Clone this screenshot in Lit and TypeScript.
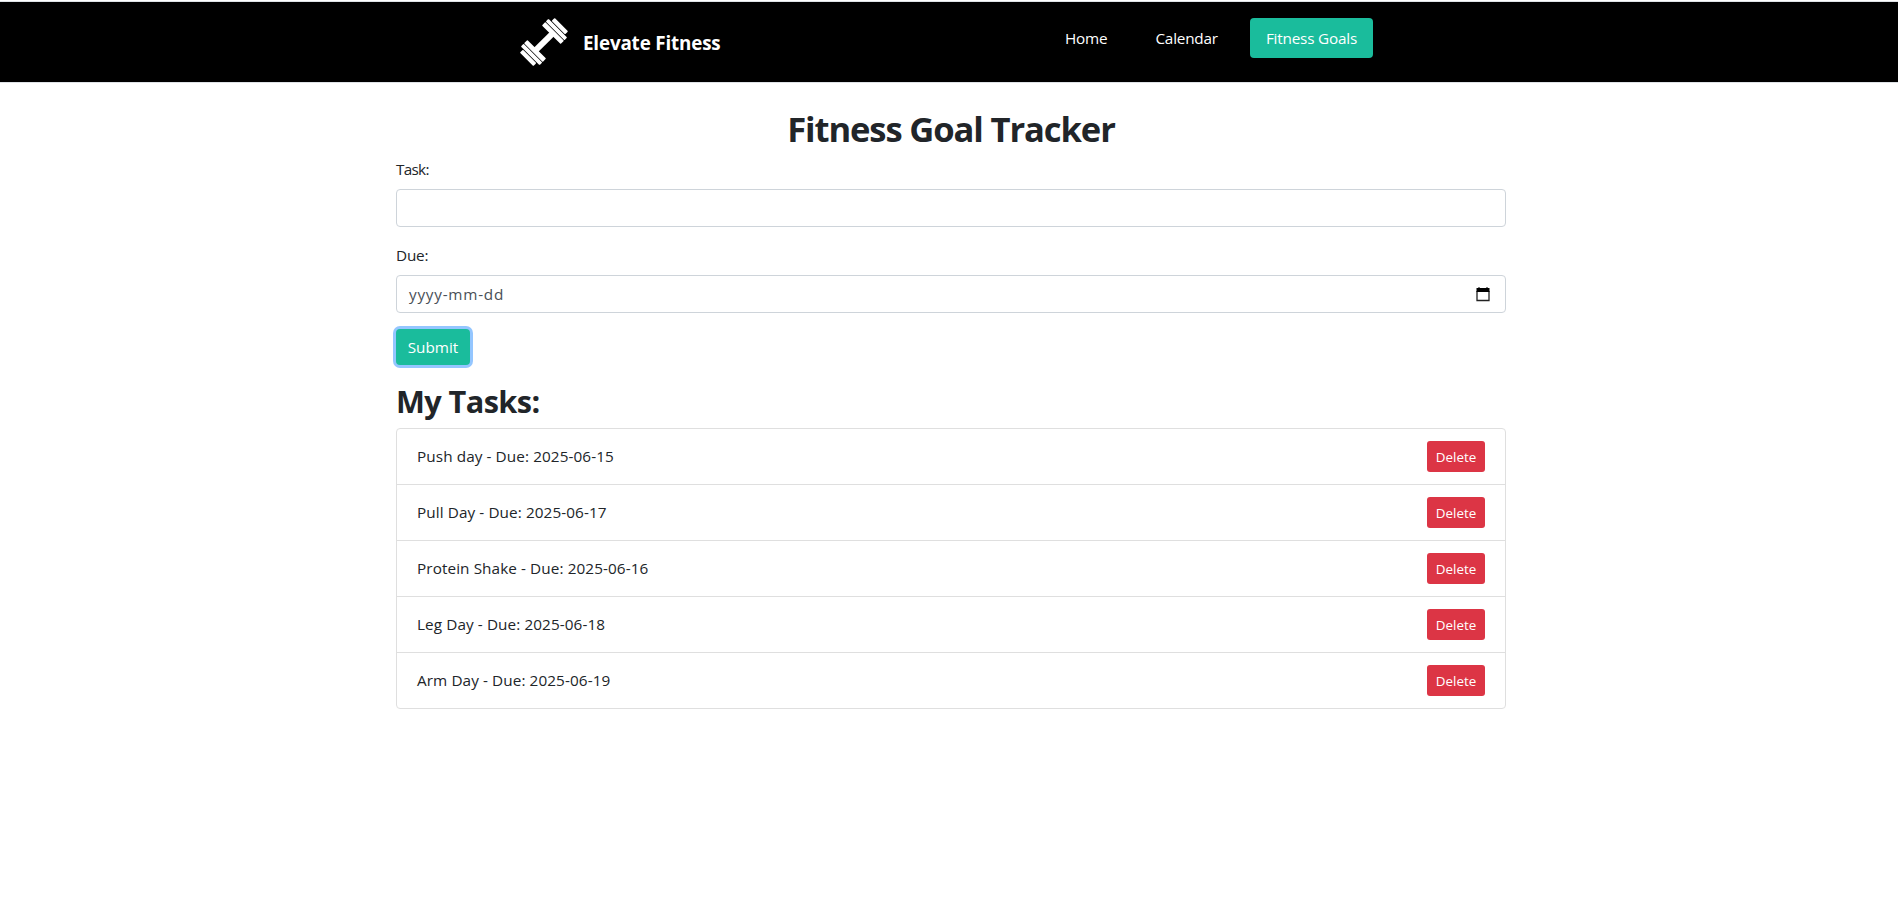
import { LitElement, html, css } from "lit";
import { customElement, state } from "lit/decorators.js";

interface Task { name: string; due: string; }

@customElement("app-root")
export class AppRoot extends LitElement {
  @state() private tasks: Task[] = [
    { name: "Push day", due: "2025-06-15" },
    { name: "Pull Day", due: "2025-06-17" },
    { name: "Protein Shake", due: "2025-06-16" },
    { name: "Leg Day", due: "2025-06-18" },
    { name: "Arm Day", due: "2025-06-19" },
  ];

  static styles = css`
    :host { display: block; min-height: 905px; background: #fff; color: #212529;
      font: 15.3px/24px "Open Sans", "Noto Sans", sans-serif; box-sizing: border-box; padding-top: 1px; }
    * { box-sizing: border-box; }
    .nav { height: 82px; background: #000; border: 1px solid #dee2e6; border-width: 1px 0; padding: 16px 525px 0 520px;
      display: flex; align-items: flex-start; justify-content: space-between; color: #fff; }
    .brand { display: flex; align-items: center; height: 48px; gap: 15px; }
    .logo { display: block; width: 48px; height: 48px; }
    .name { font-weight: 700; font-size: 18.8px; letter-spacing: -0.15px; padding-top: 2px; white-space: nowrap; }
    .links { display: flex; gap: 16px; }
    .link { height: 40px; padding: 8px 16px; border-radius: 4px; color: #fff; text-decoration: none; white-space: nowrap; letter-spacing: -0.2px; }
    .active { background: #1abc9c; }
    .page { width: 1110px; margin: 24px auto 0 396px; }
    h1 { margin: 0; font-size: 34.6px; line-height: 44px; font-weight: 700; text-align: center; letter-spacing: -1.12px; }
    .label { display: block; height: 24px; margin: 6px 0 8px; letter-spacing: -0.2px; }
    .label.task { letter-spacing: -0.7px; }
    .field { display: flex; align-items: center; justify-content: space-between; width: 100%; height: 38px;
      border: 1px solid #ced4da; border-radius: 4px; padding: 0 15px 0 12px; background: #fff; color: #495057; font: inherit; }
    .placeholder { letter-spacing: 0.75px; }
    .label.due { margin-top: 16px; }
    .cal { width: 14px; height: 15px; display: block; }
    button { border: 0; color: #fff; font: inherit; display: block; }
    .submit { margin-top: 16px; width: 74px; height: 36px; padding: 0; background: #1abc9c; border-radius: 4px; box-shadow: 0 0 0 3px #94c6ff; }
    h2 { margin: 17px 0 8px; font-size: 30.7px; line-height: 38px; font-weight: 700; letter-spacing: -0.6px; }
    .list { margin: 0; padding: 0; list-style: none; border: 1px solid #dfdfdf; border-radius: 4px; }
    .item { height: 56px; padding: 0 20px; display: flex; align-items: center; justify-content: space-between; border-bottom: 1px solid #dfdfdf; }
    .item:last-child { height: 55px; border-bottom: 0; }
    .text { letter-spacing: 0.09px; padding-bottom: 1px; }
    .delete { width: 58px; height: 31px; padding: 2px 0 0; background: #dc3545; border-radius: 3px; font-size: 13.4px; line-height: 21px; }
  `;

  private remove(task: Task) { this.tasks = this.tasks.filter((t) => t !== task); }

  render() {
    return html`
      <nav class="nav">
        <div class="brand">
          <svg class="logo" viewBox="0 0 48 48" fill="#fff">
            <g transform="rotate(-45 24 24)">
              <rect x="12" y="21" width="24" height="6"/>
              <rect x="34.3" y="10.8" width="4.7" height="26.4" rx="0.7"/>
              <rect x="39.7" y="10.8" width="3.8" height="26.4" rx="0.7"/>
              <rect x="44.3" y="14.5" width="4.3" height="19" rx="0.9"/>
              <rect x="9" y="10.8" width="4.7" height="26.4" rx="0.7"/>
              <rect x="4.5" y="10.8" width="3.8" height="26.4" rx="0.7"/>
              <rect x="-0.6" y="14.5" width="4.3" height="19" rx="0.9"/>
            </g>
          </svg>
          <span class="name">Elevate Fitness</span>
        </div>
        <div class="links">
          <a class="link">Home</a><a class="link">Calendar</a><a class="link active">Fitness Goals</a>
        </div>
      </nav>
      <main class="page">
        <h1>Fitness Goal Tracker</h1>
        <label class="label task">Task:</label>
        <input class="field" type="text" />
        <label class="label due">Due:</label>
        <div class="field"><span class="placeholder">yyyy-mm-dd</span>
          <svg class="cal" viewBox="0 0 14 15"><path d="M3 0v2M11 0v2" stroke="#000"/><path d="M1 4v9.5h12V4" fill="none" stroke="#222" stroke-width="1.3"/><path d="M.5 1h13v4H.5z"/></svg>
        </div>
        <button class="submit">Submit</button>
        <h2>My Tasks:</h2>
        <ul class="list">
          ${this.tasks.map((t) => html`<li class="item"><span class="text">${t.name} - Due: ${t.due}</span>
            <button class="delete" @click=${() => this.remove(t)}>Delete</button></li>`)}
        </ul>
      </main>`;
  }
}
